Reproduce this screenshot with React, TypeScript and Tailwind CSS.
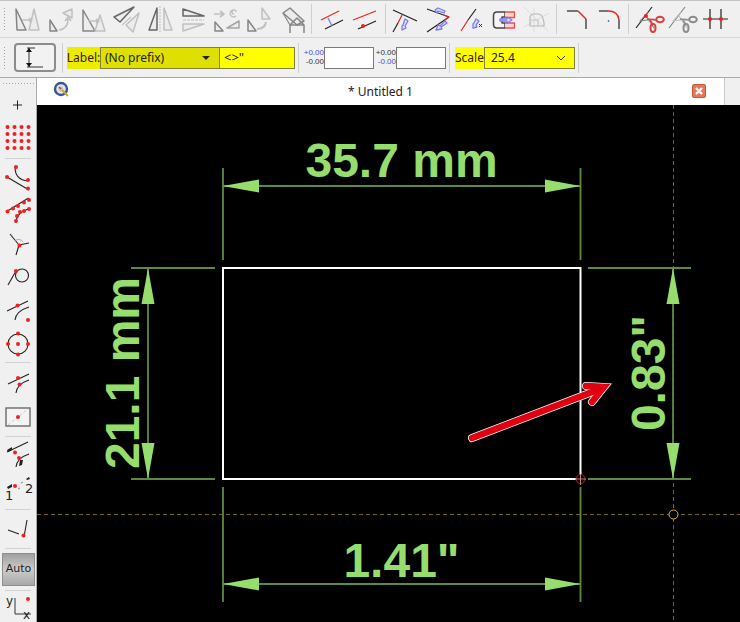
import type { ReactNode } from "react";

const GRAY = "#858585";
const LIGHT = "#c0c0c0";
const RED = "#f02020";
const BLUE = "#7a7cf0";

// icons are drawn in page coordinates, the viewBox just picks the window
function Tool({ x, children }: { x: number; children: ReactNode }) {
  return (
    <svg className="h-[37px] w-[33px] flex-none" viewBox={`${x} 1 33 37`} fill="none" strokeLinejoin="round">
      {children}
    </svg>
  );
}

function Side({ y, h, children }: { y: number; h: number; children: ReactNode }) {
  return (
    <svg className="w-[36px] flex-none" height={h} viewBox={`0 ${y} 36 ${h}`} fill="none">
      {children}
    </svg>
  );
}

function Sep() {
  return <div className="ml-[2px] mr-[3px] h-[30px] w-px flex-none self-center bg-[#cfcfcf]" />;
}

function SideSep({ className }: { className: string }) {
  return <div className={`mx-[5px] h-px flex-none bg-[#d2d2d2] ${className}`} />;
}

function Grip({ className }: { className?: string }) {
  return (
    <div className={`flex flex-none flex-col gap-[2px] ${className ?? ""}`}>
      {[0, 1, 2, 3, 4, 5, 6, 7].map((i) => (
        <span key={i} className="block h-px w-px bg-[#a0a0a0]" />
      ))}
    </div>
  );
}

function Dot({ x, y, r = 2 }: { x: number; y: number; r?: number }) {
  return <circle cx={x} cy={y} r={r} fill={RED} />;
}

function Tri({ p, c = GRAY, f = "#ececec" }: { p: string; c?: string; f?: string }) {
  return <polygon points={p} stroke={c} strokeWidth="1.5" fill={f} />;
}

function Pencil({ d }: { d: string }) {
  return <path d={d} stroke={BLUE} strokeWidth="1.3" fill="#dfe0ff" />;
}

function ToolRow() {
  return (
    <div className="flex h-[38px] flex-none items-center border-y border-t-[#c4c4c4] border-b-[#d6d6d6] pl-[4px]">
      <Grip className="mr-[7px] w-px" />
      <Tool x={12}>
        <Tri p="16,9 26,30 17,30" />
        <Tri p="34,9 39,30 29,30" c={LIGHT} />
        <path d="M22 20h9m-2-2 3 2-3 2" stroke={LIGHT} strokeWidth="1.4" />
      </Tool>
      <Tool x={45}>
        <Tri p="50,20 57,31 50,31" />
        <Tri p="72,9 72,18 63,13" c={LIGHT} />
        <path d="M59 30q9-1 9-11m-3 2 3-4 3 4" stroke={LIGHT} strokeWidth="1.6" />
      </Tool>
      <Tool x={78}>
        <Tri p="83,10 95,31 83,31" />
        <Tri p="100,15 105,31 95,31" c={LIGHT} />
        <path d="M88 21h10m-2-2 3 2-3 2" stroke={LIGHT} strokeWidth="1.6" />
      </Tool>
      <Tool x={111}>
        <Tri p="114,17 134,7 120,22" c="#666" />
        <Tri p="139,13 133,32 126,25" c={LIGHT} />
        <path d="M122 25l9-8" stroke={LIGHT} strokeWidth="1.2" />
      </Tool>
      <Tool x={144}>
        <Tri p="157,8 157,30 149,30" c="#666" />
        <Tri p="164,8 172,30 164,30" c={LIGHT} />
        <path d="M160 6v27" stroke={LIGHT} strokeWidth="1" strokeDasharray="2 1" />
      </Tool>
      <Tool x={177}>
        <Tri p="183,9 204,16 183,16" c="#666" />
        <Tri p="183,31 204,24 183,24" c={LIGHT} />
        <path d="M183 20h21" stroke={LIGHT} strokeWidth="1" strokeDasharray="3 1" />
      </Tool>
      <Tool x={210}>
        <Tri p="215,22 223,31 215,31" />
        <Tri p="239,21 239,28 227,28" c="#a4a4a4" />
        <path d="M214 14h9m-3-3 4 3-4 3" stroke={LIGHT} strokeWidth="1.6" />
        <path d="M236 16a3.500 3.500 0 1 1-3-6m3 2a2 2 0 1 0-2 2" stroke={LIGHT} strokeWidth="1.4" />
      </Tool>
      <Tool x={243}>
        <Tri p="248,20 256,31 248,31" />
        <Tri p="262,8 270,19 262,19" c={LIGHT} />
        <path d="M257 29q8 0 9-7" stroke={LIGHT} strokeWidth="2" />
      </Tool>
      <Tool x={276}>
        <path d="M283 13l7-5 14 13-7 4z" stroke={GRAY} strokeWidth="1.500" fill="#ececec" />
        <path d="M283 13l7 12" stroke={GRAY} strokeWidth="1.200" />
        <path d="M290 33v-8l7-7 7 7v8M290 25h14" stroke={GRAY} strokeWidth="1.500" />
      </Tool>
      <Sep />
      <div className="w-[2px] flex-none" />
      <Tool x={317}>
        <path d="M321 20l18-9" stroke={RED} strokeWidth="1.200" />
        <path d="M325 29l18-9" stroke="#222" strokeWidth="1.200" />
        <path d="M328 18l4 8" stroke={BLUE} strokeWidth="1.200" />
      </Tool>
      <Tool x={350}>
        <path d="M353 20l23-9" stroke={RED} strokeWidth="1.200" />
        <path d="M358 29l18-8" stroke="#222" strokeWidth="1.200" />
        <Dot x={363} y={26} />
      </Tool>
      <Sep />
      <Tool x={389}>
        <path d="M393 10l24 11" stroke="#222" strokeWidth="1.200" />
        <path d="M402 15l-4 8" stroke={RED} strokeWidth="1.200" />
        <path d="M398 23l-5 9" stroke="#222" strokeWidth="1.200" />
        <Pencil d="M405 19l3 2-3 5 1 2-4 2 0-4 1-1z" />
      </Tool>
      <Tool x={422}>
        <path d="M427 9l22 8" stroke="#222" strokeWidth="1.200" />
        <path d="M449 17l-22 15" stroke="#222" strokeWidth="1.200" />
        <path d="M444 15l5 2-4 3" stroke={RED} strokeWidth="1.200" />
        <Pencil d="M438 8l7 3-1 2-6-2-1 2-2-3z" />
        <Pencil d="M447 23l-6 4 1 2-6 1 2-5 2 1 5-5z" />
      </Tool>
      <Tool x={455}>
        <path d="M476 9l-8 11" stroke="#222" strokeWidth="1.200" />
        <path d="M468 20l-7 11" stroke={RED} strokeWidth="1.200" />
        <Pencil d="M476 19l3 2-3 4 1 2-4 1 0-4 1-1z" />
        <path d="M479 24l3 3m0-3-3 3" stroke="#333" strokeWidth="1" />
      </Tool>
      <Tool x={488}>
        <path d="M505 12h-8q-3.500 0-3.500 3.500v9q0 3.500 3.500 3.500h8v-5h-3v-6h3z" stroke="#444" strokeWidth="1.500" fill="#f4f4f4" />
        <path d="M505 12h9.500v5.500h-9.500M505 23h9.500v5h-9.500" stroke="#e85050" strokeWidth="1.300" fill="#ffd0d0" />
        <Pencil d="M500 19h7v-2l5 3-5 3v-2h-7z" />
      </Tool>
      <Tool x={521}>
        <path d="M524 7l24 24M524 27l25-14M534 8l0 24" stroke="#dddddd" strokeWidth="1" />
        <path d="M530 26V18q0-4 4-4h4q5 0 6 9v3z" stroke="#b8b8b8" strokeWidth="1.200" />
        <path d="M530 20h8v6" stroke="#c4c4c4" strokeWidth="1.200" />
      </Tool>
      <Sep />
      <Tool x={560}>
        <path d="M567 11h11" stroke="#222" strokeWidth="1.200" />
        <path d="M578 11l8 8" stroke={RED} strokeWidth="1.400" />
        <path d="M586 19v10" stroke="#222" strokeWidth="1.200" />
      </Tool>
      <Tool x={593}>
        <path d="M599 11h9" stroke="#222" strokeWidth="1.200" />
        <path d="M608 11q10 0 11 9" stroke={RED} strokeWidth="1.400" />
        <path d="M619 20v9" stroke="#222" strokeWidth="1.200" />
        <circle cx="608.500" cy="21" r="0.800" fill="#2020e0" />
      </Tool>
      <Sep />
      <div className="w-[2px] flex-none" />
      <Tool x={634}>
        <path d="M636 28l16-21" stroke="#222" strokeWidth="1.200" />
        <path d="M646 16l8 12M648 12l-8 9 14-2" stroke={GRAY} strokeWidth="1.100" />
        <ellipse cx="660" cy="19.500" rx="3.800" ry="2.800" stroke="#d84040" strokeWidth="2" />
        <ellipse cx="653" cy="28" rx="2.500" ry="4" stroke="#d84040" strokeWidth="2" />
        <path d="M647 19l9 1M650 20l3 5" stroke="#d84040" strokeWidth="1.600" />
        <Dot x={646} y={16} />
      </Tool>
      <Tool x={667}>
        <path d="M669 28l16-21" stroke={GRAY} strokeWidth="1.200" />
        <path d="M679 16l8 12M681 12l-8 9 14-2" stroke={LIGHT} strokeWidth="1.100" />
        <ellipse cx="693" cy="19.500" rx="3.800" ry="2.800" stroke="#8c8c8c" strokeWidth="2" />
        <ellipse cx="686" cy="28" rx="2.500" ry="4" stroke="#8c8c8c" strokeWidth="2" />
        <path d="M680 19l9 1M683 20l3 5" stroke="#8c8c8c" strokeWidth="1.600" />
      </Tool>
      <Tool x={700}>
        <path d="M703 19h25M710 9v20M721 9v20" stroke="#222" strokeWidth="1.200" />
        <Dot x={710} y={19} />
        <Dot x={721} y={19} />
      </Tool>
    </div>
  );
}

function ToleranceField({ top, bottom }: { top: string; bottom: string }) {
  return (
    <div className="flex items-center">
      <div className="flex w-[21px] flex-col items-end gap-[1px] font-['Liberation_Sans',sans-serif] text-[8px] leading-[8px]">
        <span className={top}>+0.00</span>
        <span className={bottom}>-0.00</span>
      </div>
      <div className="h-[22px] w-[50px] border border-[#7a7a7a] bg-white" />
    </div>
  );
}

function OptionRow() {
  return (
    <div className="flex h-[40px] flex-none items-center border-b border-[#a9a9a9] pl-[4px] text-[12px] text-[#222]">
      <Grip className="mr-[9px] w-px" />
      <div className="flex h-[29px] w-[42px] flex-none items-center justify-center rounded-[4px] border-2 border-[#8c8c8c] bg-[#f2f2f2]">
        <svg width="22" height="22" viewBox="25 47 22 22" fill="none">
          <path d="M28 48h8M28 67h16M30 48v19" stroke="#333" strokeWidth="1" />
          <path d="M30 48l-3 4h6zM30 67l-3-4h6z" fill="#111" />
        </svg>
      </div>
      <div className="ml-[6px] h-[30px] w-px flex-none bg-[#cfcfcf]" />
      <div className="ml-[4px] flex h-[22px] flex-none items-center">
        <div className="flex h-[22px] w-[33px] items-center justify-center bg-[#ecec00] text-[#3a1a00]">Label:</div>
        <div className="flex h-[22px] w-[120px] items-center justify-between border border-[#808040] bg-[#e0e000] pl-[4px] pr-[9px]">
          <span>(No prefix)</span>
          <span className="h-0 w-0 border-x-[4px] border-t-[4px] border-x-transparent border-t-[#222]" />
        </div>
        <div className="flex h-[22px] w-[75px] items-center border border-l-0 border-[#808040] bg-[#ffff00] pl-[4px] text-[13px]">
          {'<>"'}
        </div>
      </div>
      <div className="ml-[3px] h-[30px] w-px flex-none bg-[#cfcfcf]" />
      <div className="ml-[4px] flex flex-none items-center gap-[1px]">
        <ToleranceField top="text-[#4a4ae0]" bottom="text-[#333]" />
        <ToleranceField top="text-[#333]" bottom="text-[#4a4ae0]" />
      </div>
      <div className="ml-[3px] h-[30px] w-px flex-none bg-[#cfcfcf]" />
      <div className="ml-[5px] flex h-[22px] flex-none items-center bg-[#ffff00]">
        <div className="w-[29px] text-[#3a1a00]">Scale</div>
        <div className="flex h-[22px] w-[91px] items-center justify-between border border-[#808040] pl-[6px] pr-[8px]">
          <span>25.4</span>
          <svg width="10" height="6" viewBox="0 0 10 6" fill="none">
            <path d="M1 1l4 4 4-4" stroke="#333" strokeWidth="1" />
          </svg>
        </div>
      </div>
      <div className="ml-[3px] h-[30px] w-px flex-none bg-[#cfcfcf]" />
    </div>
  );
}

function SideBar() {
  return (
    <div className="flex w-[37px] flex-none flex-col border-r border-[#a9a9a9] bg-[#f0f0f0]">
      <div className="flex h-[10px] flex-none items-center gap-[2px] pl-[3px]">
        {[0, 1, 2, 3, 4, 5, 6, 7, 8, 9, 10].map((i) => (
          <span key={i} className="block h-px w-px bg-[#a8a8a8]" />
        ))}
      </div>
      <Side y={88} h={32}>
        <path d="M13 105h9M17.500 100.500v9" stroke="#222" strokeWidth="1" />
      </Side>
      <Side y={120} h={36}>
        {[7.5, 14.5, 21.5, 28.5].flatMap((x) => [127, 134, 141, 148].map((y) => <Dot key={`${x}-${y}`} x={x} y={y} />))}
      </Side>
      <SideSep className="mb-[6px] mt-[2px]" />
      <Side y={165} h={31}>
        <path d="M15 167q0 13 13 14M7 177l22 13" stroke="#222" strokeWidth="1.100" />
        <Dot x={16} y={167} />
        <Dot x={28} y={180} />
        <Dot x={7} y={177} />
        <Dot x={28} y={188.500} />
      </Side>
      <Side y={196} h={31}>
        <path d="M7.500 211l21-13M16 221q1-8 12-12" stroke="#222" strokeWidth="1.200" />
        <Dot x={7.500} y={211.500} />
        <Dot x={13} y={208.500} />
        <Dot x={18} y={206} />
        <Dot x={24} y={202.500} />
        <Dot x={29} y={200} />
        <Dot x={16} y={221} />
        <Dot x={17} y={216} />
        <Dot x={20} y={212} />
        <Dot x={24} y={211} />
        <Dot x={29} y={209} />
      </Side>
      <Side y={227} h={33}>
        <path d="M10 234l9 11-3 10M19 245l10-2" stroke="#222" strokeWidth="1.100" />
        <path d="M15 241a5 5 0 0 1 8 1" stroke="#999" strokeWidth="0.800" />
        <Dot x={19.500} y={245.500} />
      </Side>
      <Side y={260} h={33}>
        <circle cx="22" cy="275.500" r="6.500" stroke="#222" strokeWidth="1.100" />
        <path d="M16 271l-8 14" stroke="#222" strokeWidth="1.100" />
        <Dot x={16} y={271} />
      </Side>
      <Side y={293} h={33}>
        <path d="M7 311l21-10M15 320q1-9 14-13" stroke="#222" strokeWidth="1.100" />
        <Dot x={17.500} y={305.500} />
        <Dot x={28} y={320} />
      </Side>
      <Side y={326} h={34}>
        <circle cx="18" cy="344" r="10" stroke="#222" strokeWidth="1.100" />
        <Dot x={18} y={344} />
        <Dot x={18} y={333.500} />
        <Dot x={18} y={354.500} />
        <Dot x={8} y={344} />
        <Dot x={28} y={344} />
      </Side>
      <SideSep className="mb-[5px] mt-[2px]" />
      <Side y={368} h={32}>
        <path d="M8 384l21-10M16 393q1-9 13-13" stroke="#222" strokeWidth="1.100" />
        <Dot x={18} y={378} />
        <Dot x={19.500} y={384.500} />
      </Side>
      <div className="flex h-[33px] flex-none items-center justify-center">
        <svg width="26" height="20" viewBox="5 406 26 20" fill="none">
          <rect x="6" y="407" width="24" height="18" fill="#f4f4f4" stroke="#6a6a6a" strokeWidth="1.400" />
          <path d="M8 424l20-16" stroke="#bbbbbb" strokeWidth="0.800" strokeDasharray="3 2" />
          <Dot x={18} y={416} />
        </svg>
      </div>
      <SideSep className="mb-[3px] mt-[3px]" />
      <Side y={440} h={33}>
        <path d="M7 452l21-10M16 467q1-9 13-13" stroke="#222" strokeWidth="1.100" />
        <path d="M7 450l5-3 0 3-4 2zM20 460l-1 6 3-1 1-5z" fill="#222" />
        <Dot x={15} y={452.500} />
        <Dot x={19} y={458} />
      </Side>
      <div className="relative h-[30px] flex-none">
        <svg className="absolute inset-0" width="36" height="30" viewBox="0 473 36 30" fill="none">
          <path d="M7 487l5-3 0 3-4 2zM26 479l3-2 1 2-3 1z" fill="#222" />
          <path d="M21 483l2-1M18 489l2-1" stroke="#777" strokeWidth="0.900" />
          <Dot x={15} y={486} />
        </svg>
        <span className="absolute left-[5px] top-[16px] font-['DejaVu_Sans',sans-serif] text-[13px] leading-[14px] text-[#222]">1</span>
        <span className="absolute left-[25px] top-[9px] font-['DejaVu_Sans',sans-serif] text-[13px] leading-[14px] text-[#222]">2</span>
      </div>
      <SideSep className="mb-[5px] mt-[6px]" />
      <Side y={515} h={32}>
        <path d="M8 530l11 4M27 520l-3 17" stroke="#222" strokeWidth="1.100" />
        <Dot x={23.500} y={535.500} />
      </Side>
      <SideSep className="mb-[4px] mt-[1px]" />
      <div className="ml-[2px] mr-[1px] flex h-[33px] flex-none items-center justify-center border border-[#8e8e8e] bg-gradient-to-b from-[#a0a0a0] via-[#cccccc] to-[#a8a8a8] font-['DejaVu_Sans',sans-serif] text-[11px] text-[#222]">
        Auto
      </div>
      <SideSep className="mt-[4px]" />
      <div className="relative h-[31px] flex-none">
        <svg className="absolute inset-0" width="36" height="31" viewBox="0 591 36 31" fill="none">
          <path d="M15 598v16h16" stroke="#333" strokeWidth="1" />
          <Dot x={28} y={599} />
        </svg>
        <span className="absolute left-[6px] top-[3px] font-['DejaVu_Sans',sans-serif] text-[12px] leading-[14px] text-[#222]">y</span>
        <span className="absolute left-[23px] top-[17px] font-['DejaVu_Sans',sans-serif] text-[12px] leading-[14px] text-[#222]">x</span>
      </div>
    </div>
  );
}

function TitleBar() {
  return (
    <div className="flex h-[27px] flex-none">
      <div className="relative flex flex-1 items-center justify-center bg-white text-[12px] text-[#222]">
        <svg className="absolute left-[16px] top-[3px]" width="18" height="18" viewBox="0 0 18 18" fill="none">
          <circle cx="8" cy="8" r="6" fill="#e8e4da" stroke="#2f5a96" strokeWidth="2.400" />
          <circle cx="8" cy="8" r="2.500" fill="#b9c9e0" />
          <path d="M9 9l6 6" stroke="#e0a020" strokeWidth="2" />
          <path d="M6 6l2 2" stroke="#c83030" strokeWidth="1.400" />
        </svg>
        <span>* Untitled 1</span>
        <div className="absolute left-[655px] top-[6px] flex h-[14px] w-[14px] items-center justify-center rounded-[2px] border border-[#c45a3a] bg-[#e4795a]">
          <svg width="10" height="10" viewBox="0 0 10 10" fill="none">
            <path d="M2 2l6 6m0-6l-6 6" stroke="#fff" strokeWidth="2.200" />
          </svg>
        </div>
      </div>
      <div className="w-[16px] flex-none border-l border-[#c8c8c8] bg-[#f0f0f0]" />
    </div>
  );
}

function Canvas() {
  const line = "#5c8a42";
  const fill = "#95dd6d";
  return (
    <div className="min-h-0 flex-1 bg-black">
      <svg className="block h-[517px] w-[703px]" viewBox="37 105 703 517" fill="none">
        {/* cursor cross */}
        <path d="M673.500 105v517M37 514.500h703" stroke="#7a6414" strokeWidth="1" strokeDasharray="4 3" />

        {/* top dimension */}
        <path d="M223 168v92M580.500 168v92M223 186h357" stroke={line} strokeWidth="1.800" />
        <polygon points="223,186 259,179.500 259,192.500" fill={fill} />
        <polygon points="580.500,186 545,179.500 545,192.500" fill={fill} />
        <text x="401.500" y="177" textAnchor="middle" fontFamily="Liberation Sans, sans-serif" fontWeight="700" fontSize="48" fill={fill}>
          35.7 mm
        </text>

        {/* left dimension */}
        <path d="M131 268h84M131 479h84M148 268v211" stroke={line} strokeWidth="1.800" />
        <polygon points="148,268 141.500,304 154.500,304" fill={fill} />
        <polygon points="148,479 141.500,443 154.500,443" fill={fill} />
        <text
          transform="translate(139 373) rotate(-90)"
          textAnchor="middle"
          fontFamily="Liberation Sans, sans-serif"
          fontWeight="700"
          fontSize="48"
          fill={fill}
        >
          21.1 mm
        </text>

        {/* right dimension */}
        <path d="M588 268h103M588 479h103M673 268v211" stroke={line} strokeWidth="1.800" />
        <polygon points="673,268 666.500,304 679.500,304" fill={fill} />
        <polygon points="673,479 666.500,443 679.500,443" fill={fill} />
        <text
          transform="translate(665 373) rotate(-90)"
          textAnchor="middle"
          fontFamily="Liberation Sans, sans-serif"
          fontWeight="700"
          fontSize="48"
          fill={fill}
        >
          0.83"
        </text>

        {/* bottom dimension */}
        <path d="M223 487v115M580.500 487v115M223 584h357" stroke={line} strokeWidth="1.800" />
        <polygon points="223,584 259,577.500 259,590.500" fill={fill} />
        <polygon points="580.500,584 545,577.500 545,590.500" fill={fill} />
        <text x="401.500" y="577" textAnchor="middle" fontFamily="Liberation Sans, sans-serif" fontWeight="700" fontSize="48" fill={fill}>
          1.41"
        </text>

        {/* rectangle */}
        <rect x="223" y="268" width="357.500" height="211" stroke="#fff" strokeWidth="2" />
        <circle cx="580.500" cy="479" r="4.500" stroke="#c02020" strokeWidth="1" fill="#000" />
        <path d="M575 479h11M580.500 474v11" stroke="#d8a0a0" strokeWidth="0.800" />
        <circle cx="673.500" cy="514.500" r="4.500" stroke="#f0b820" strokeWidth="1" fill="#000" />

        {/* selection arrow */}
        <path d="M472 438l128-49" stroke="#fff" strokeWidth="8" strokeLinecap="round" />
        <path d="M586 386l18 1-12 15" stroke="#fff" strokeWidth="8" strokeLinecap="round" strokeLinejoin="miter" />
        <path d="M472 438l128-49" stroke="#e00010" strokeWidth="6.500" strokeLinecap="round" />
        <path d="M586 386l18 1-12 15" stroke="#e00010" strokeWidth="6.500" strokeLinecap="round" strokeLinejoin="miter" />
      </svg>
    </div>
  );
}

export default function App() {
  return (
    <div className="flex h-[622px] w-[740px] flex-col overflow-hidden bg-[#f0f0f0] font-['Noto_Sans',sans-serif]">
      <ToolRow />
      <OptionRow />
      <div className="flex min-h-0 flex-1">
        <SideBar />
        <div className="flex min-w-0 flex-1 flex-col">
          <TitleBar />
          <Canvas />
        </div>
      </div>
    </div>
  );
}
